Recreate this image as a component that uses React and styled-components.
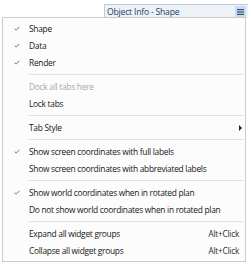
import React from "react";
import styled, { createGlobalStyle } from "styled-components";

const Global = createGlobalStyle`
  html, body { margin: 0; padding: 0; background: #ffffff; }
  body { font-family: "Open Sans", "Noto Sans", sans-serif; }
`;

const Page = styled.div`
  width: 248px;
  height: 264px;
  display: flex;
  flex-direction: column;
  overflow: hidden;
  background: #ffffff;
`;

const TabBar = styled.div`
  display: flex;
  justify-content: flex-end;
  padding-top: 4px;
  height: 13px;
`;

const Tab = styled.div`
  width: 144px;
  display: flex;
  align-items: center;
  justify-content: space-between;
  background: #eef2f7;
  border-top: 1px solid #b9cbe2;
  border-left: 1px solid #b9cbe2;
  padding-left: 2px;
  box-sizing: border-box;
  height: 14px;
`;

const TabTitle = styled.span`
  font-size: 8.6px;
  letter-spacing: -0.2px;
  color: #1f3c6b;
  line-height: 12px;
  padding-top: 1px;
`;

const MenuButton = styled.div`
  width: 11px;
  height: 12px;
  background: #c4dcf5;
  display: flex;
  align-items: center;
  justify-content: center;
  margin-right: 2px;
`;

const Menu = styled.div`
  margin-left: 2px;
  width: 244px;
  box-sizing: border-box;
  border: 1px solid #cbcbcb;
  background: #fcfcfc;
  padding: 2px 0 2px 0;
  display: flex;
  flex-direction: column;
`;

const Item = styled.div`
  height: 17px;
  display: grid;
  grid-template-columns: 26px 1fr auto;
  align-items: center;
  font-size: 8.4px;
  letter-spacing: -0.28px;
  color: ${(p) => (p.$disabled ? "#a8a8a8" : "#161616")};
  padding-right: 6px;
`;

const CheckCell = styled.span`
  display: flex;
  justify-content: center;
  padding-left: 1px;
`;

const Label = styled.span`
  white-space: nowrap;
`;

const Shortcut = styled.span`
  font-size: 8.2px;
  letter-spacing: -0.2px;
  color: #2a2a2a;
`;

const Separator = styled.div`
  height: 7px;
  display: flex;
  align-items: center;
  padding-left: 26px;
  padding-right: 2px;
  &::after {
    content: "";
    flex: 1;
    height: 1px;
    background: #e2e2e2;
  }
`;

const Arrow = styled.span`
  width: 0;
  height: 0;
  border-top: 3px solid transparent;
  border-bottom: 3px solid transparent;
  border-left: 3px solid #222;
  margin-right: -3px;
`;

const Check = () => (
  <svg width="6" height="5" viewBox="0 0 6 5">
    <path d="M0.6 2.6 L2.2 4.1 L5.4 0.8" stroke="#666" strokeWidth="0.9" fill="none" />
  </svg>
);

const Hamburger = () => (
  <svg width="7" height="6" viewBox="0 0 7 6">
    <rect x="0" y="0" width="7" height="1.2" fill="#3d4f66" />
    <rect x="0" y="2.4" width="7" height="1.2" fill="#3d4f66" />
    <rect x="0" y="4.8" width="7" height="1.2" fill="#3d4f66" />
  </svg>
);

const entries = [
  { label: "Shape", checked: true },
  { label: "Data", checked: true },
  { label: "Render", checked: true },
  { sep: true },
  { label: "Dock all tabs here", disabled: true },
  { label: "Lock tabs" },
  { sep: true },
  { label: "Tab Style", submenu: true },
  { sep: true },
  { label: "Show screen coordinates with full labels", checked: true },
  { label: "Show screen coordinates with abbreviated labels" },
  { sep: true },
  { label: "Show world coordinates when in rotated plan", checked: true },
  { label: "Do not show world coordinates when in rotated plan" },
  { sep: true },
  { label: "Expand all widget groups", shortcut: "Alt+Click" },
  { label: "Collapse all widget groups", shortcut: "Alt+Click" },
];

export default function App() {
  return (
    <Page>
      <Global />
      <TabBar>
        <Tab>
          <TabTitle>Object Info - Shape</TabTitle>
          <MenuButton>
            <Hamburger />
          </MenuButton>
        </Tab>
      </TabBar>
      <Menu>
        {entries.map((e, i) =>
          e.sep ? (
            <Separator key={i} />
          ) : (
            <Item key={i} $disabled={e.disabled}>
              <CheckCell>{e.checked ? <Check /> : null}</CheckCell>
              <Label>{e.label}</Label>
              {e.shortcut ? <Shortcut>{e.shortcut}</Shortcut> : e.submenu ? <Arrow /> : <span />}
            </Item>
          )
        )}
      </Menu>
    </Page>
  );
}
